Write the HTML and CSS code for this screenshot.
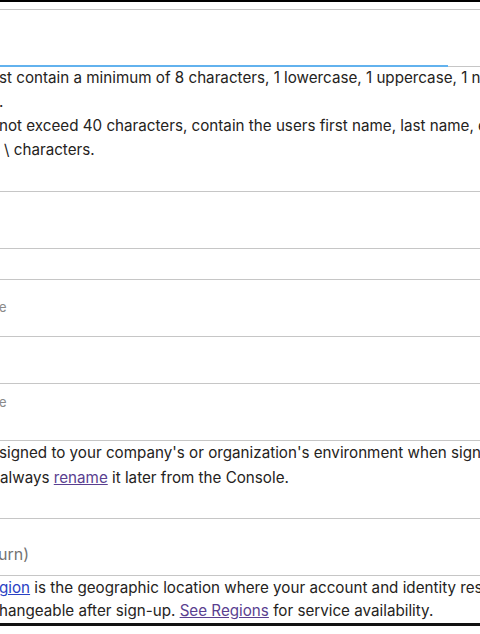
FILE: index.html
```html
<!DOCTYPE html>
<html lang="en">
<head>
  <meta charset="UTF-8">
  <meta name="viewport" content="width=device-width, initial-scale=1.0">
  <title>Sign up - account details</title>
  <link rel="stylesheet" href="styles.css">
</head>
<body>

  <div class="frame">

    <!-- password, focused -->
    <div class="field field-first"></div>
    <div class="underline"><span class="focus-bar"></span><span class="rest-bar"></span></div>

    <div class="hint">
      <p><span class="cut-1">st contain a minimum of 8 characters, 1 lowercase, 1 uppercase, 1 numeric</span><br><span class="cut-1">.</span></p>
      <p><span class="cut-1">not exceed 40 characters, contain the users first name, last name, email</span><br><span class="cut-slash">\ characters.</span></p>
    </div>

    <!-- confirm password -->
    <div class="field field-confirm"></div>

    <div class="field field-label field-label-low">
      <span class="label cut-1">e</span>
    </div>

    <div class="field field-label field-label-high">
      <span class="label cut-1">e</span>
    </div>

    <div class="hint hint-mid">
      <p><span class="cut-1">signed to your company's or organization's environment when signing</span><br>always <a href="#" class="link-visited">rename</a> it later from the Console.</p>
    </div>

    <!-- home region -->
    <div class="field field-select">
      <span class="placeholder cut-2">urn)</span>
    </div>

    <div class="hint hint-last">
      <p><span class="cut-1"><a href="#" class="link">gion</a> is the geographic location where your account and identity resources</span><br><span class="cut-1">hangeable after sign-up. <a href="#" class="link-visited">See Regions</a> for service availability.</span></p>
    </div>

  </div>

</body>
</html>
```

FILE: styles.css
```css
body {
  margin: 0;
  padding: 0;
  background-color: #fff;
  font-family: Inter, "Noto Sans", sans-serif;
  color: #252321;
}
.frame {
  border-top: 2px solid #000;
  border-bottom: 3px solid #111;
  box-shadow: 0 2px 3px rgba(0, 0, 0, 0.35);
  padding-bottom: 1px;
  overflow: hidden;
  white-space: nowrap;
}
.field {
  border-top: 1px solid #c6c6c6;
  border-bottom: 1px solid #c6c6c6;
  height: 58px;
  box-sizing: border-box;
}
.field-first {
  margin-top: 7px;
  border-bottom: none;
  height: 56px;
}
.underline {
  display: flex;
  align-items: center;
  height: 2px;
}
.focus-bar {
  width: 448px;
  height: 2px;
  background-color: #62b2ee;
}
.rest-bar {
  flex: 1;
  height: 1px;
  background-color: #c6c6c6;
}
.hint {
  margin-top: -1px;
}
.hint p {
  margin: 0;
  font-size: 15.2px;
  line-height: 24px;
}
.field-confirm {
  margin-top: 29px;
}
.field-label-low {
  margin-top: 30px;
  padding-top: 18px;
}
.field-label-high {
  margin-top: 46px;
  padding-top: 9px;
}
.label {
  display: block;
  font-size: 13px;
  line-height: 18px;
  color: #8a8a8a;
}
.hint-mid p {
  line-height: 25px;
}
.field-select {
  margin-top: 28px;
  padding-top: 23px;
}
.placeholder {
  display: block;
  font-size: 16px;
  line-height: 24px;
  color: #737373;
}
.hint-last {
  margin-top: 0;
}
.hint-last p {
  line-height: 23px;
}
.cut-1 {
  margin-left: -1px;
}
.cut-2 {
  margin-left: -2px;
}
.cut-slash {
  margin-left: 4px;
}
.link {
  color: #2a42c4;
}
.link-visited {
  color: #5a3f90;
}
```
